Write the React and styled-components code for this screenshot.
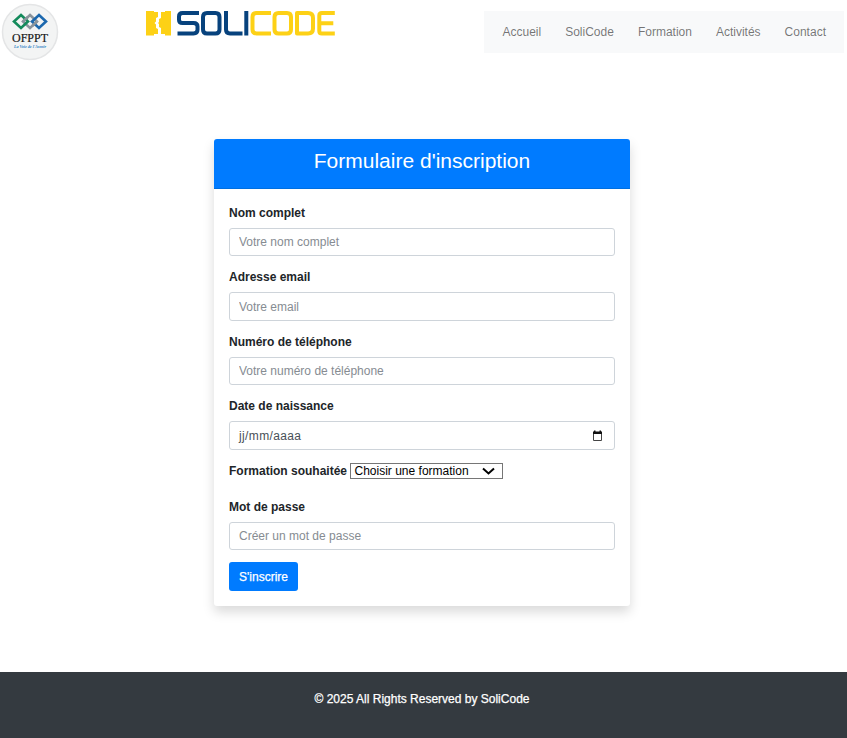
import React from "react";
import styled, { createGlobalStyle } from "styled-components";

const GlobalStyle = createGlobalStyle`
  *, *::before, *::after { box-sizing: border-box; }
  body {
    margin: 0;
    background: #fff;
    color: #212529;
    font: 400 12px/18px "Liberation Sans", Arial, sans-serif;
    overflow: hidden;
  }
  input, select, button { font-family: inherit; }
`;

const Page = styled.div`
  display: flex;
  flex-direction: column;
  height: 738px;
`;

const Header = styled.header`
  display: flex;
  align-items: flex-start;
  height: 139px;
  padding: 3px 3px 0 1px;
`;

const Seal = styled.svg`
  flex: none;
  width: 58px;
  height: 58px;
`;

const Wordmark = styled.svg`
  flex: none;
  width: 191px;
  height: 29px;
  margin: 6px 0 0 86px;
`;

const Nav = styled.nav`
  display: flex;
  align-items: center;
  gap: 24px;
  width: 360px;
  height: 42px;
  margin: 8px 0 0 auto;
  padding-left: 18.5px;
  background: #f8f9fa;
`;

const NavLink = styled.a`
  color: rgba(0, 0, 0, 0.54);
  text-decoration: none;
  white-space: nowrap;
`;

const Card = styled.main`
  width: 416px;
  height: 467px;
  margin-left: 214px;
  border-radius: 3px;
  background: #fff;
  box-shadow: 0 6px 12px rgba(0, 0, 0, 0.15);
`;

const CardHeader = styled.div`
  height: 50px;
  padding: 9px 15px;
  border-bottom: 1px solid #006fe0;
  border-radius: 3px 3px 0 0;
  background: #007bff;
  color: #fff;
  text-align: center;
`;

const Title = styled.h3`
  margin: 0;
  font-size: 21px;
  font-weight: 400;
  line-height: 25px;
`;

const Form = styled.form`
  padding: 15px;
`;

const Field = styled.div`
  height: 64.4px;
`;

const SelectField = styled.div`
  display: flex;
  align-items: flex-start;
  gap: 3px;
  height: 36.4px;
`;

const Label = styled.label`
  display: block;
  margin-bottom: 6px;
  font-weight: 700;
`;

const Control = styled.input`
  display: block;
  width: 100%;
  height: 28.4px;
  padding: 4px 9px;
  border: 1px solid #ced4da;
  border-radius: 3px;
  background: #fff;
  color: #495057;
  font-size: 12px;
  line-height: 18px;
  outline: none;
  &::placeholder { color: #868c92; opacity: 1; }
`;

const DateControl = styled.div`
  display: flex;
  align-items: center;
  justify-content: space-between;
  height: 28.5px;
  padding: 1px 10px 0 9px;
  border: 1px solid #ced4da;
  border-radius: 3px;
  color: #495057;
  letter-spacing: 0.37px;
`;

const Select = styled.button`
  display: flex;
  align-items: center;
  justify-content: space-between;
  width: 153px;
  height: 16px;
  margin-top: 1px;
  padding: 0 7px 0 3.5px;
  border: 1px solid #767676;
  background: #fff;
  color: #000;
  font-size: 12px;
  line-height: 14px;
`;

const Submit = styled.button`
  height: 28.5px;
  width: 69px;
  padding: 0;
  border: 0;
  border-radius: 3px;
  background: #007bff;
  color: #fff;
  font-size: 12px;
  -webkit-text-stroke: 0.25px #fff;
`;

const Footer = styled.footer`
  height: 66px;
  margin-top: auto;
  padding: 18px 3px 0 0;
  background: #343a40;
  color: #fff;
  text-align: center;
  -webkit-text-stroke: 0.25px #fff;
`;

const links = ["Accueil", "SoliCode", "Formation", "Activités", "Contact"];

function OfpptLogo() {
  return (
    <Seal viewBox="0 0 58 58" role="img" aria-label="OFPPT">
      <circle cx="29" cy="29" r="27.5" fill="#f3f4f4" stroke="#e4e5e6" strokeWidth="1.500" />
      <g fill="none" strokeWidth="2.6">
        <path d="M29 12l7 6.500-7 6.500-7-6.500z" stroke="#8a949c" />
        <path d="M20 12l7 6.500-7 6.500-7-6.500z" stroke="#138a5b" />
        <path d="M38 12l7 6.500-7 6.500-7-6.500z" stroke="#1c68ae" />
        <path d="M22 18.500l4.500-4.200M36 18.500l-4.500 4.200" stroke="#8a949c" />
      </g>
      <text x="11" y="39" textLength="36" lengthAdjust="spacingAndGlyphs" fontFamily="Liberation Serif, serif" fontSize="12" fill="#161616" stroke="#161616" strokeWidth=".2">OFPPT</text>
      <text x="13" y="45" textLength="32" lengthAdjust="spacingAndGlyphs" fontFamily="Liberation Serif, serif" fontSize="4.6" fontStyle="italic" fontWeight="700" fill="#2d7fc4">La Voie de l'Avenir</text>
    </Seal>
  );
}

function SolicodeLogo() {
  return (
    <Wordmark viewBox="0 0 191 29" preserveAspectRatio="none" role="img" aria-label="SOLICODE">
      <g fill="#fdd116">
        <path d="M1 2h8v1h4v5l-2 1v3.500l-1.500 1.500 1.500 1.500v3.500l2 1v5h-4v1.500H1z" />
        <path d="M26 2h-6v1h-4v6l-2 1v3l-1 1 1 1v3l2 1v6h4v1.500h6z" />
      </g>
      <g fill="none" strokeWidth="4" strokeLinejoin="round">
        <g stroke="#07427d">
          <path d="M54 4H37.500q-3.500 0-3.500 3.500v3.200q0 3.400 3.500 3.400h11q4 0 4 3.500v3.200q0 3.600-4 3.600H32.500" />
          <path d="M62 4h8.500q4 0 4 4v12.400q0 4-4 4H62q-4 0-4-4v-12.400q0-4 4-4z" />
          <path d="M81 2v18.500q0 3.900 4 3.900h12.500M101.300 2v24.400" />
        </g>
        <g stroke="#fdd116">
          <path d="M126 4h-14.500q-4 0-4 4v12.400q0 4 4 4H126" />
          <path d="M133.500 4h8.500q4 0 4 4v12.400q0 4-4 4h-8.500q-4 0-4-4v-12.400q0-4 4-4z" />
          <path d="M152 4h11q5 0 5 5v10.400q0 5-5 5h-11z" />
          <path d="M189.800 4h-13q-2.500 0-2.500 2.500v15.400q0 2.500 2.500 2.500h13M174.300 14.200h14" />
        </g>
      </g>
    </Wordmark>
  );
}

function TextField({ label, placeholder, type = "text" }) {
  return (
    <Field>
      <Label>{label}</Label>
      <Control type={type} placeholder={placeholder} aria-label={label} />
    </Field>
  );
}

function CalendarIcon() {
  return (
    <svg width="12" height="12" viewBox="0 0 12 12">
      <path d="M1.500 2.500h8v8h-8z" fill="none" stroke="#444" />
      <path d="M1 1.500h9v2.500H1zM2 .5h1.500v2H2zM7.500.5h1.500v2H7.500z" fill="#111" />
    </svg>
  );
}

export default function App() {
  return (
    <>
      <GlobalStyle />
      <Page>
        <Header>
          <OfpptLogo />
          <SolicodeLogo />
          <Nav>
            {links.map((name) => <NavLink key={name} href="#">{name}</NavLink>)}
          </Nav>
        </Header>
        <Card>
          <CardHeader><Title>Formulaire d'inscription</Title></CardHeader>
          <Form onSubmit={(e) => e.preventDefault()}>
            <TextField label="Nom complet" placeholder="Votre nom complet" />
            <TextField label="Adresse email" placeholder="Votre email" type="email" />
            <TextField label="Numéro de téléphone" placeholder="Votre numéro de téléphone" type="tel" />
            <Field>
              <Label>Date de naissance</Label>
              <DateControl><span>jj/mm/aaaa</span><CalendarIcon /></DateControl>
            </Field>
            <SelectField>
              <Label>Formation souhaitée</Label>
              <Select type="button">
                <span>Choisir une formation</span>
                <svg width="13" height="8" viewBox="0 0 13 8"><path d="M1 1.500l5.500 5 5.500-5" fill="none" stroke="#000" strokeWidth="2" /></svg>
              </Select>
            </SelectField>
            <TextField label="Mot de passe" placeholder="Créer un mot de passe" type="password" />
            <Submit type="submit">S'inscrire</Submit>
          </Form>
        </Card>
        <Footer>© 2025 All Rights Reserved by SoliCode</Footer>
      </Page>
    </>
  );
}
